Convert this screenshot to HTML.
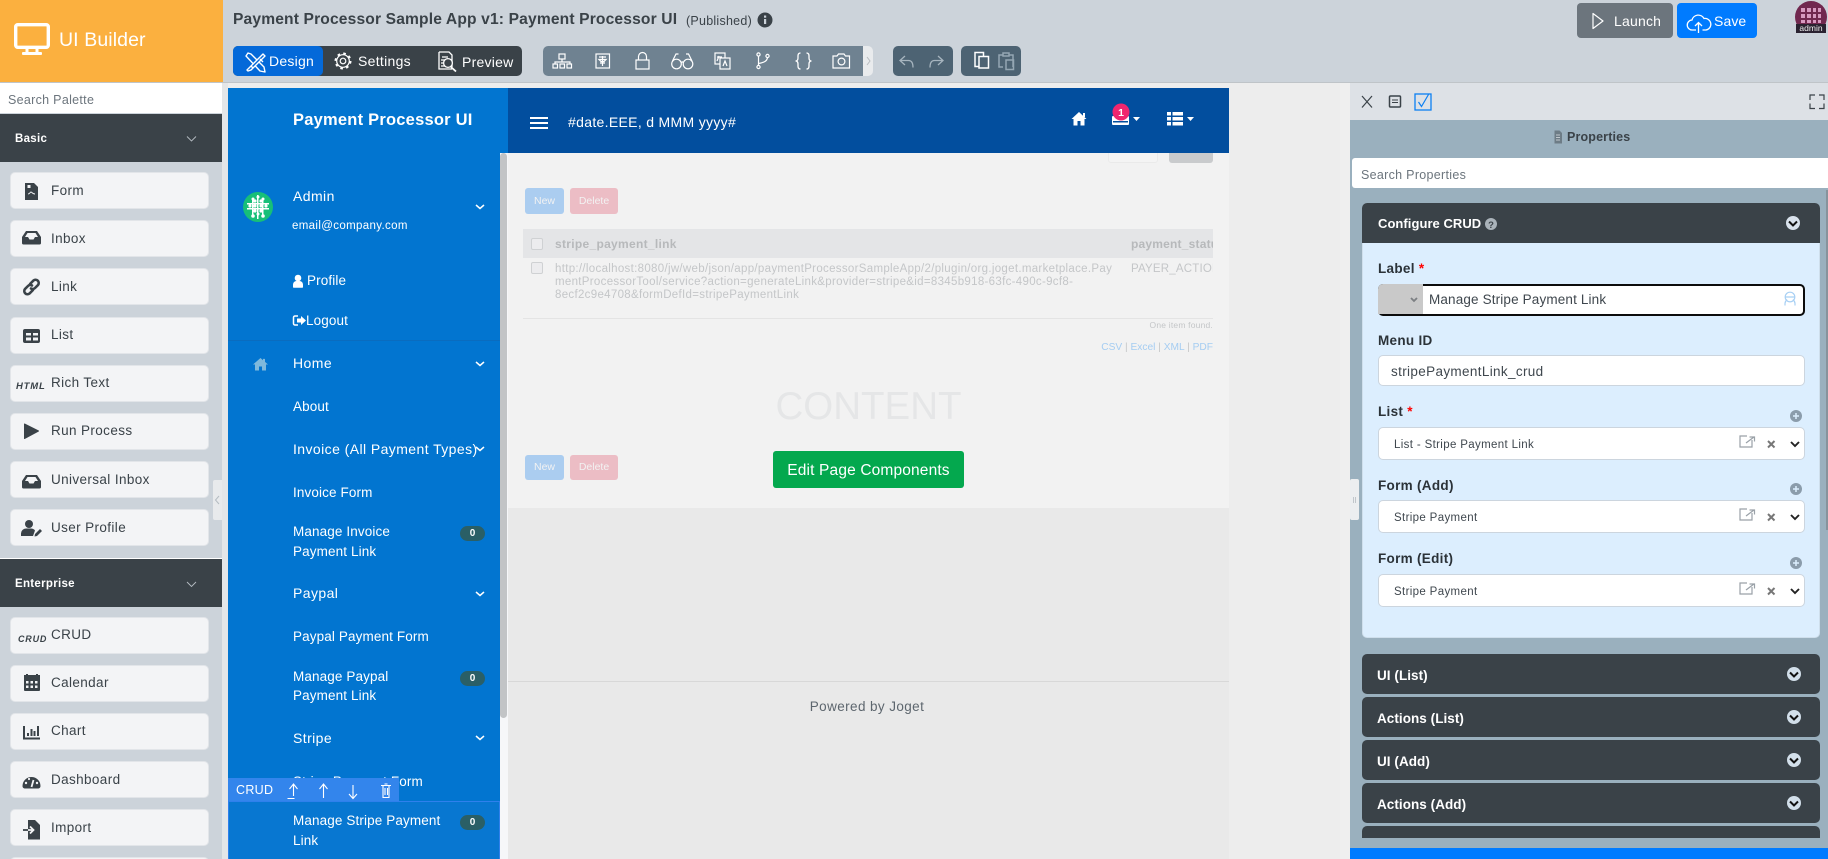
<!DOCTYPE html>
<html><head><meta charset="utf-8"><title>UI Builder</title>
<style>
html,body{margin:0;padding:0;width:1828px;height:859px;overflow:hidden;background:#ccd3da;font-family:"Liberation Sans",sans-serif}
#root{position:relative;width:1828px;height:859px;overflow:hidden}
.b{position:absolute}
.t{position:absolute;white-space:nowrap;line-height:20px;height:20px}
.pi{position:absolute;left:10px;width:199px;height:37px;box-sizing:border-box;background:#f3f4f6;border:1px solid #e2e5e9;border-radius:5px}
.pl{position:absolute;left:51px;white-space:nowrap;line-height:20px;font-size:13.5px;letter-spacing:.38px;color:#3a4248}
.s{position:absolute;left:293px;white-space:nowrap;line-height:20px;font-size:13.5px;letter-spacing:.12px;color:#fff}
.h{font-size:14px;letter-spacing:.42px}
.bd{position:absolute;left:460px;width:25px;height:15px;border-radius:8px;background:#2a5f66;color:#fff;font-size:10px;font-weight:bold;text-align:center;line-height:15px}
.ah{position:absolute;left:1362px;width:458px;height:40px;background:#3a4248;border-radius:5px;color:#fff;font-weight:bold;font-size:13.5px;letter-spacing:.05px;line-height:43px;text-indent:15px}
.lb{position:absolute;left:1378px;color:#2b3238;font-weight:bold;font-size:13.5px;letter-spacing:.3px;line-height:20px;white-space:nowrap}
.in{position:absolute;left:1378px;width:427px;box-sizing:border-box;background:#fff;border:1px solid #ccd5de;border-radius:5px}
.g{color:#c4c6c8;font-size:11.5px}
.btn{position:absolute;border-radius:3px;color:#f2f2f2;font-size:10.5px;text-align:center}
</style></head><body><div id="root">

<!-- top bar -->
<div class="b" style="left:0;top:82px;width:1828px;height:1px;background:#bfc4c8"></div>
<div class="b" style="left:0;top:0;width:223px;height:82px;background:#fbb03f"></div>
<div class="t" style="left:59px;top:29px;height:22px;line-height:22px;color:#fff;font-size:19.5px;letter-spacing:.1px">UI Builder</div>
<div class="t" style="left:233px;top:10px;color:#3a4248;font-size:15.6px;font-weight:bold;letter-spacing:.15px">Payment Processor Sample App v1: Payment Processor UI</div>
<div class="t" style="left:686px;top:11px;color:#3a4248;font-size:12.5px;letter-spacing:.25px">(Published)</div>

<div class="b" style="left:233px;top:46px;width:289px;height:30px;background:#3a4248;border-radius:5px"></div>
<div class="b" style="left:233px;top:46px;width:90px;height:30px;background:#0469d9;border-radius:5px"></div>
<div class="t" style="left:269px;top:51px;color:#fff;font-size:14px;letter-spacing:.25px">Design</div>
<div class="t" style="left:358px;top:51px;color:#fff;font-size:14px;letter-spacing:.3px">Settings</div>
<div class="t" style="left:462px;top:52px;color:#fff;font-size:14px;letter-spacing:.25px">Preview</div>

<div class="b" style="left:543px;top:46px;width:330px;height:30px;background:#e9ebed;border-radius:5px"></div>
<div class="b" style="left:543px;top:46px;width:320px;height:30px;background:#6f8291;border-radius:5px 0 0 5px"></div>
<div class="b" style="left:893px;top:46px;width:60px;height:30px;background:#4d6373;border-radius:5px"></div>
<div class="b" style="left:961px;top:46px;width:60px;height:30px;background:#4d6373;border-radius:5px"></div>

<div class="b" style="left:1577px;top:3px;width:96px;height:35px;background:#6c757d;border-radius:4px"></div>
<div class="t" style="left:1614px;top:11px;color:#fff;font-size:14px;letter-spacing:.2px">Launch</div>
<div class="b" style="left:1677px;top:3px;width:80px;height:35px;background:#007bff;border-radius:4px"></div>
<div class="t" style="left:1714px;top:11px;color:#fff;font-size:14px;letter-spacing:.1px">Save</div>

<!-- palette -->
<div class="b" style="left:0;top:83px;width:222px;height:776px;background:#ccd3da"></div>
<div class="b" style="left:222px;top:83px;width:6px;height:776px;background:#e4e6e8"></div>
<div class="b" style="left:0;top:83px;width:222px;height:30px;background:#fff"></div>
<div class="t" style="left:8px;top:90px;color:#6c757d;font-size:12.5px;letter-spacing:.3px">Search Palette</div>
<div class="b" style="left:0;top:114px;width:222px;height:48px;background:#3a4248"></div>
<div class="t" style="left:15px;top:129px;color:#fff;font-size:11.5px;font-weight:bold;letter-spacing:.3px">Basic</div>

<div class="pi" style="top:172px"></div><div class="pl" style="top:181px">Form</div>
<div class="pi" style="top:220px"></div><div class="pl" style="top:229px">Inbox</div>
<div class="pi" style="top:268px"></div><div class="pl" style="top:277px">Link</div>
<div class="pi" style="top:317px"></div><div class="pl" style="top:325px">List</div>
<div class="pi" style="top:365px"></div><div class="pl" style="top:373px">Rich Text</div>
<div class="pi" style="top:413px"></div><div class="pl" style="top:421px">Run Process</div>
<div class="pi" style="top:461px"></div><div class="pl" style="top:470px">Universal Inbox</div>
<div class="pi" style="top:509px"></div><div class="pl" style="top:518px">User Profile</div>
<div class="t" style="left:16px;top:377px;color:#3a4248;font-size:9.5px;font-weight:bold;font-style:italic;letter-spacing:.8px">HTML</div>

<div class="b" style="left:0;top:558px;width:222px;height:1px;background:#fff"></div>
<div class="b" style="left:0;top:559px;width:222px;height:48px;background:#3a4248"></div>
<div class="t" style="left:15px;top:574px;color:#fff;font-size:11.5px;font-weight:bold;letter-spacing:.3px">Enterprise</div>

<div class="pi" style="top:617px"></div><div class="pl" style="top:625px">CRUD</div>
<div class="pi" style="top:665px"></div><div class="pl" style="top:673px">Calendar</div>
<div class="pi" style="top:713px"></div><div class="pl" style="top:721px">Chart</div>
<div class="pi" style="top:761px"></div><div class="pl" style="top:770px">Dashboard</div>
<div class="pi" style="top:809px"></div><div class="pl" style="top:818px">Import</div>
<div class="pi" style="top:857px"></div>
<div class="t" style="left:18px;top:629px;color:#3a4248;font-size:9px;font-weight:bold;font-style:italic;letter-spacing:.8px">CRUD</div>
<div class="b" style="left:213px;top:480px;width:9px;height:40px;background:#e8eaec;border-radius:2px 0 0 2px"></div>

<!-- canvas -->
<div class="b" style="left:228px;top:83px;width:1122px;height:776px;background:#ededed"></div>
<div class="b" style="left:508px;top:153px;width:721px;height:355px;background:#f2f2f2"></div>
<div class="b" style="left:508px;top:508px;width:721px;height:351px;background:#e9e9e9"></div>
<div class="b" style="left:508px;top:681px;width:721px;height:1px;background:#d8d8d8"></div>
<div class="t" style="left:508px;width:721px;top:697px;text-align:center;color:#5d666e;font-size:13.5px;letter-spacing:.4px;text-indent:-3px">Powered by Joget</div>
<div class="b" style="left:500px;top:153px;width:8px;height:706px;background:#f6f7f9"></div>

<!-- page list -->
<div class="b" style="left:1108px;top:140px;width:50px;height:23px;box-sizing:border-box;border:1px solid #eaeaea;background:#f4f4f4;border-radius:3px"></div>
<div class="b" style="left:1169px;top:140px;width:44px;height:23px;background:#c9cbcd;border-radius:3px"></div>
<div class="btn" style="left:525px;top:188px;width:39px;height:26px;line-height:26px;background:#abcdf0">New</div>
<div class="btn" style="left:570px;top:188px;width:48px;height:26px;line-height:26px;background:#ecbdc5">Delete</div>
<div class="b" style="left:523px;top:229px;width:690px;height:29px;background:#e4e5e7"></div>
<div class="b" style="left:531px;top:238px;width:10px;height:10px;border:1px solid #cfd1d3;border-radius:2px;background:#ececee"></div>
<div class="t g" style="left:555px;top:234px;font-weight:bold;font-size:12px;letter-spacing:.3px;color:#b7b9bb">stripe_payment_link</div>
<div class="t" style="left:1131px;top:234px;width:82px;overflow:hidden;font-weight:bold;font-size:12px;letter-spacing:.2px;color:#b7b9bb">payment_status</div>
<div class="b" style="left:531px;top:262px;width:10px;height:10px;border:1px solid #cfd1d3;border-radius:2px;background:#ececee"></div>
<div class="t g" style="left:555px;top:259px;letter-spacing:.31px">http://localhost:8080/jw/web/json/app/paymentProcessorSampleApp/2/plugin/org.joget.marketplace.Pay</div>
<div class="t g" style="left:555px;top:272px;letter-spacing:.31px">mentProcessorTool/service?action=generateLink&amp;provider=stripe&amp;id=8345b918-63fc-490c-9cf8-</div>
<div class="t g" style="left:555px;top:285px;letter-spacing:.31px">8ecf2c9e4708&amp;formDefId=stripePaymentLink</div>
<div class="t g" style="left:1131px;top:259px;width:82px;overflow:hidden;letter-spacing:.2px">PAYER_ACTION_REQUIRED</div>
<div class="b" style="left:523px;top:318px;width:690px;height:1px;background:#e4e4e4"></div>
<div class="t" style="left:1100px;width:113px;text-align:right;top:315px;font-size:8.5px;color:#c4c6c8;letter-spacing:.2px">One item found.</div>
<div class="t" style="left:1090px;width:123px;text-align:right;top:338px;font-size:10.2px;color:#a5cdf2">CSV <span style="color:#c4c6c8">|</span> Excel <span style="color:#c4c6c8">|</span> XML <span style="color:#c4c6c8">|</span> PDF</div>
<div class="t" style="left:508px;width:721px;top:382px;height:50px;line-height:50px;text-align:center;font-size:38.5px;color:#e5e6e7">CONTENT</div>
<div class="btn" style="left:525px;top:455px;width:39px;height:25px;line-height:25px;background:#abcdf0">New</div>
<div class="btn" style="left:570px;top:455px;width:48px;height:25px;line-height:25px;background:#ecbdc5">Delete</div>
<div class="b" style="left:773px;top:451px;width:191px;height:37px;background:#04a84e;border-radius:3px;color:#fff;font-size:15.5px;text-align:center;line-height:39px;letter-spacing:.15px">Edit Page Components</div>

<!-- nav header -->
<div class="b" style="left:508px;top:88px;width:721px;height:65px;background:#024e9e"></div>
<div class="b" style="left:530px;top:117px;width:18px;height:2px;background:#fff"></div>
<div class="b" style="left:530px;top:122px;width:18px;height:2px;background:#fff"></div>
<div class="b" style="left:530px;top:127px;width:18px;height:2px;background:#fff"></div>
<div class="t" style="left:568px;top:112px;color:#fff;font-size:14px;letter-spacing:.32px">#date.EEE, d MMM yyyy#</div>

<!-- sidebar -->
<div class="b" style="left:228px;top:88px;width:280px;height:65px;background:#0275d0"></div>
<div class="b" style="left:228px;top:153px;width:272px;height:706px;background:#0275d0"></div>
<div class="b" style="left:500px;top:153px;width:7px;height:565px;background:#c2c4c6;border-radius:4px"></div>
<div class="t" style="left:293px;top:110px;color:#fff;font-size:16.5px;font-weight:bold;letter-spacing:.22px">Payment Processor UI</div>
<div class="s h" style="top:186px">Admin</div>
<div class="s" style="left:292px;top:216px;font-size:11.5px;letter-spacing:.35px">email@company.com</div>
<div class="s" style="left:307px;top:271px">Profile</div>
<div class="s" style="left:306px;top:311px">Logout</div>
<div class="b" style="left:228px;top:340px;width:272px;height:1px;background:#0a6cbf"></div>
<div class="s h" style="top:353px">Home</div>
<div class="s" style="top:397px">About</div>
<div class="s h" style="top:439px">Invoice (All Payment Types)</div>
<div class="s" style="top:483px">Invoice Form</div>
<div class="s" style="top:522px">Manage Invoice</div>
<div class="s" style="top:542px">Payment Link</div>
<div class="bd" style="top:526px">0</div>
<div class="s h" style="top:583px">Paypal</div>
<div class="s" style="top:627px">Paypal Payment Form</div>
<div class="s" style="top:667px">Manage Paypal</div>
<div class="s" style="top:686px">Payment Link</div>
<div class="bd" style="top:671px">0</div>
<div class="s h" style="top:728px">Stripe</div>
<div class="s" style="top:772px">Stripe Payment Form</div>
<div class="b" style="left:228px;top:801px;width:272px;height:58px;box-sizing:border-box;border:1px solid #2f80ec;border-bottom:0;background:#0877d1"></div>
<div class="s" style="top:811px">Manage Stripe Payment</div>
<div class="s" style="top:831px">Link</div>
<div class="bd" style="top:815px">0</div>
<div class="b" style="left:228px;top:778px;width:171px;height:23px;background:#3385ec"></div>
<div class="t" style="left:236px;top:780px;color:#fff;font-size:12.5px;letter-spacing:.3px">CRUD</div>

<!-- right panel -->
<div class="b" style="left:1340px;top:83px;width:10px;height:776px;background:#efefef"></div>
<div class="b" style="left:1350px;top:83px;width:478px;height:37px;background:#dde1e6"></div>
<div class="b" style="left:1350px;top:120px;width:478px;height:739px;background:#9ab0be"></div>
<div class="t" style="left:1567px;top:127px;color:#3a4248;font-size:12.5px;font-weight:bold;letter-spacing:.15px">Properties</div>
<div class="b" style="left:1352px;top:158px;width:476px;height:30px;background:#fff;border-radius:3px 0 0 3px"></div>
<div class="t" style="left:1361px;top:165px;color:#6c757d;font-size:12.5px;letter-spacing:.3px">Search Properties</div>
<div class="b" style="left:1350px;top:479px;width:9px;height:41px;background:#eceef0;border-radius:2px"></div>
<div class="b" style="left:1826px;top:190px;width:2px;height:340px;background:#87939c"></div>

<div class="b" style="left:1362px;top:203px;width:458px;height:435px;box-sizing:border-box;background:#dceefe;border:1px solid #cfdfec;border-radius:5px"></div>
<div class="ah" style="top:203px;border-radius:5px 5px 0 0;line-height:41px;text-indent:16px;font-size:13px">Configure CRUD</div>

<div class="lb" style="top:259px">Label <span style="color:#f00">*</span></div>
<div class="b" style="left:1378px;top:284px;width:427px;height:32px;box-sizing:border-box;background:#fff;border:2px solid #0c0c0c;border-radius:5px"></div>
<div class="b" style="left:1378px;top:284px;width:45px;height:30px;background:#c9c9c9;border-radius:5px 0 0 0"></div>
<div class="t" style="left:1429px;top:290px;color:#3f474e;font-size:13.5px;letter-spacing:.15px">Manage Stripe Payment Link</div>

<div class="lb" style="top:331px">Menu ID</div>
<div class="in" style="top:355px;height:31px"></div>
<div class="t" style="left:1391px;top:362px;color:#3f474e;font-size:13.5px;letter-spacing:.35px">stripePaymentLink_crud</div>

<div class="lb" style="top:402px">List <span style="color:#f00">*</span></div>
<div class="in" style="top:427px;height:33px"></div>
<div class="t" style="left:1394px;top:435px;color:#3f474e;font-size:11.5px;letter-spacing:.35px">List - Stripe Payment Link</div>

<div class="lb" style="top:476px">Form (Add)</div>
<div class="in" style="top:500px;height:33px"></div>
<div class="t" style="left:1394px;top:508px;color:#3f474e;font-size:11.5px;letter-spacing:.35px">Stripe Payment</div>

<div class="lb" style="top:549px">Form (Edit)</div>
<div class="in" style="top:574px;height:33px"></div>
<div class="t" style="left:1394px;top:582px;color:#3f474e;font-size:11.5px;letter-spacing:.35px">Stripe Payment</div>

<div class="ah" style="top:654px">UI (List)</div>
<div class="ah" style="top:697px">Actions (List)</div>
<div class="ah" style="top:740px">UI (Add)</div>
<div class="ah" style="top:783px">Actions (Add)</div>
<div class="b" style="left:1362px;top:826px;width:458px;height:12px;background:#3a4248;border-radius:5px 5px 0 0"></div>
<div class="b" style="left:1350px;top:848px;width:478px;height:11px;background:#007bff"></div>

<!-- icons -->
<svg class="b" style="left:0;top:0" width="1828" height="859" viewBox="0 0 1828 859" fill="none">
<!-- logo -->
<rect x="15.7" y="24.7" width="32.6" height="22.6" rx="2" stroke="#fff" stroke-width="3.4"/>
<path d="M27 49v4M37 49v4" stroke="#fff" stroke-width="3"/><rect x="22" y="52" width="20" height="3" rx="1" fill="#fff"/>
<!-- info -->
<circle cx="765" cy="20" r="7.5" fill="#3a4248"/><rect x="764" y="19" width="2.2" height="5" fill="#ccd3da"/><rect x="764" y="15.5" width="2.2" height="2.2" fill="#ccd3da"/>
<!-- design -->
<g stroke="#fff" stroke-width="1.4" stroke-linejoin="round">
<path d="M246 56l2-3 3 1 13 13 1 5-5-1z"/><path d="M249 68l14-14 2 2-14 14-3 1-1-1z" fill="#0469d9"/><path d="M260 59l3 3M251 66l2 2"/>
</g>
<!-- settings -->
<g stroke="#fff"><circle cx="343" cy="61" r="2.8" stroke-width="1.2"/><circle cx="343" cy="61" r="6.3" stroke-width="1.2"/><circle cx="343" cy="61" r="7.5" stroke-width="2" stroke-dasharray="2.6 3.29"/></g>
<!-- preview -->
<g stroke="#fff" stroke-width="1.3"><path d="M439 52h10l3 3v12M452 69h-13V52"/><path d="M442 57h6M441 60h8M441 63h6M441 66h4"/><circle cx="448" cy="63" r="4.4" fill="#3a4248"/><path d="M451 67l5 4.5" stroke-width="1.8"/></g>
<!-- tools -->
<g stroke="#fff" stroke-width="1.2">
<rect x="559" y="54" width="6" height="5"/><rect x="553" y="64" width="4.5" height="4"/><rect x="560" y="64" width="4.5" height="4"/><rect x="567" y="64" width="4.5" height="4"/><path d="M562 59v3M555 64v-2h15v2"/>
<rect x="596" y="54" width="13.5" height="14"/><path d="M602.5 56v10M599 57h7M599 59.5h7l-2 2h-3zM600 63h5"/>
<rect x="636" y="60" width="13" height="9"/><path d="M638.5 60v-3.5a4 4 0 0 1 8 0v3.5"/>
<circle cx="676.5" cy="64" r="4.8"/><circle cx="688" cy="64" r="4.8"/><path d="M681.3 62.5c1-.8 1.500-.8 2 0M672.5 61l3.500-7h2.500M692 61l-3.500-7H686"/>
<rect x="715" y="53" width="10" height="11"/><rect x="720" y="58" width="10" height="11" fill="#6f8291"/><path d="M717 57h5M719 56l-2 5M723 66l2-5 2 5"/>
<circle cx="758.5" cy="54.5" r="1.6"/><circle cx="758.5" cy="67" r="1.6"/><circle cx="767.5" cy="56" r="1.6"/><path d="M758.5 56v9.5M758.5 63.5c5-1 8.5-2 9-6"/>
<path d="M800.5 53c-3 0-2.5 3-2.5 5s-1 3-2.5 3c1.5 0 2.500 1 2.500 3s-.5 5 2.500 5M806.500 53c3 0 2.500 3 2.500 5s1 3 2.500 3c-1.500 0-2.500 1-2.500 3s.5 5-2.500 5" stroke-width="1.3"/>
<path d="M833 56h4l1.500-2h5.500l1.500 2h4v12h-16.500z"/><circle cx="841.5" cy="61.5" r="3.4"/>
</g>
<path d="M867 57l3 4-3 4" stroke="#b8bcc0" stroke-width="1"/>
<g stroke="#a7b5bf" stroke-width="1.3"><path d="M905 56l-5 4.5 5 4.5M900.500 60.5h8c3 0 4.500 2 4.500 7"/><path d="M938 56l5 4.5-5 4.5M942.500 60.5h-8c-3 0-4.500 2-4.500 7"/></g>
<g stroke="#fff" stroke-width="1.5"><path d="M983.500 56v-3.500H975v14h4"/><rect x="979" y="56.5" width="9.5" height="11.5"/></g>
<g stroke="#94a6b3" stroke-width="1.5"><path d="M1009 55h4v12M1003 67h-4V55h4"/><rect x="1003" y="53" width="6" height="3"/><rect x="1006" y="60" width="7.5" height="9.5"/></g>
<!-- launch / save -->
<path d="M1593 13.500l10 7.500-10 7.500z" stroke="#fff" stroke-width="1.2" stroke-linejoin="round"/>
<path d="M1696 30h-3.500a5 5 0 0 1-.5-10 6.500 6.500 0 0 1 12-1.500 5.500 5.500 0 0 1 2 11.500h-3.500M1698.500 33V23M1695 26l3.500-3.500 3.500 3.500" stroke="#fff" stroke-width="1.3"/>
<!-- avatar -->
<ellipse cx="1811" cy="17" rx="16" ry="16" fill="#71284f"/><path d="M1801 8h20v15h-20z" fill="#d79ac0"/><g fill="#71284f"><rect x="1805" y="8" width="2" height="15"/><rect x="1811" y="8" width="2" height="15"/><rect x="1816" y="8" width="2" height="15"/><rect x="1801" y="12" width="20" height="2"/><rect x="1801" y="18" width="20" height="2"/></g>
<rect x="1796" y="24" width="30" height="9" fill="#2a2230"/><text x="1811" y="31" font-size="8.5" fill="#eee" text-anchor="middle" font-family="Liberation Sans">admin</text>
<!-- palette chevrons -->
<path d="M187 136.500l4.500 4.500 4.500-4.500M187 582l4.500 4.500 4.500-4.500" stroke="#b5bcc2" stroke-width=".9"/>
<!-- palette icons -->
<path d="M25 183h9l4 4v13H25z" fill="#3a4248"/><path d="M28 194c2 0 2-2 3-2s1 2 4 2" stroke="#f3f4f6"/><rect x="27.5" y="185" width="3" height="3" fill="#f3f4f6"/>
<path d="M22 237l4-6h11l4 6v6a1.500 1.500 0 0 1-1.500 1.500h-16A1.500 1.500 0 0 1 22 243z" fill="#3a4248"/><path d="M25 237h3l1.500 2.500h4l1.500-2.500h3l-2.500-4h-8z" fill="#f3f4f6"/>
<path d="M22 481l4-6h11l4 6v6a1.500 1.500 0 0 1-1.500 1.500h-16A1.500 1.500 0 0 1 22 487z" fill="#3a4248"/><path d="M25 481h3l1.500 2.500h4l1.500-2.500h3l-2.500-4h-8z" fill="#f3f4f6"/>
<g stroke="#3a4248" stroke-width="2.6" stroke-linecap="round"><path d="M30 284l3.500-3.500a3.200 3.200 0 0 1 4.500 4.500l-3 3a3.200 3.200 0 0 1-4 .5"/><path d="M33 290l-3.500 3.500a3.200 3.200 0 0 1-4.500-4.500l3-3a3.200 3.200 0 0 1 4-.5"/></g>
<rect x="23" y="329" width="17" height="14" rx="2" fill="#3a4248"/><path d="M26 333h5v2.500h-5zM33 333h5v2.500h-5zM26 337.500h5v3h-5zM33 337.500h5v3h-5z" fill="#f3f4f6"/>
<path d="M24.500 424l14 7-14 7.500z" fill="#3a4248" stroke="#3a4248" stroke-linejoin="round"/>
<circle cx="29" cy="524" r="4" fill="#3a4248"/><path d="M21 536v-2.500a5 5 0 0 1 5-5h5a5 5 0 0 1 4 2l-2 5.500z" fill="#3a4248"/><path d="M35 534l5-5 2 2-5 5-2.500.5z" fill="#3a4248"/>
<path d="M24 675h16v15a1 1 0 0 1-1 1H25a1 1 0 0 1-1-1z" fill="#3a4248"/><path d="M27 677v-3M37 677v-3" stroke="#3a4248" stroke-width="2"/><g fill="#f3f4f6"><rect x="26" y="681" width="2.5" height="2.5"/><rect x="30.5" y="681" width="2.5" height="2.5"/><rect x="35" y="681" width="2.5" height="2.5"/><rect x="26" y="685.5" width="2.5" height="2.5"/><rect x="30.5" y="685.5" width="2.5" height="2.5"/><rect x="35" y="685.5" width="2.5" height="2.5"/></g>
<path d="M24 726v12.500h16" stroke="#3a4248" stroke-width="2"/><path d="M28 733v3M31.500 729v7M34.500 731v5M38 726v10" stroke="#3a4248" stroke-width="2"/>
<path d="M22.500 786a9 9 0 1 1 18 0 2.500 2.500 0 0 1-2 2.500h-14a2.500 2.500 0 0 1-2-2.500z" fill="#3a4248"/><path d="M31.500 787l2-7" stroke="#f3f4f6" stroke-width="1.8"/><circle cx="26" cy="783" r="1.2" fill="#f3f4f6"/><circle cx="37" cy="783" r="1.2" fill="#f3f4f6"/><circle cx="29" cy="779" r="1.1" fill="#f3f4f6"/>
<path d="M28 820h7l5 5v14.500H28z" fill="#3a4248"/><path d="M23 830h10M30 826.500l3.500 3.500-3.500 3.500" stroke="#f3f4f6" stroke-width="1.8"/><path d="M23 830h5" stroke="#3a4248" stroke-width="1.8"/>
<path d="M219 496l-3.500 4 3.500 4" stroke="#b5bcc2"/>
<!-- nav icons -->
<path d="M1079 112l-7.500 7h2v6.500h4v-4.500h3v4.500h4V119h2z" fill="#fff"/><rect x="1083" y="113" width="2" height="4" fill="#fff"/>
<rect x="1112" y="116" width="17" height="9" rx="1" fill="#fff"/><rect x="1113" y="121" width="15" height="1.5" fill="#024e9e"/>
<circle cx="1121" cy="112" r="8.5" fill="#f0266f"/><text x="1121" y="116" font-size="10.5" font-weight="bold" fill="#fff" text-anchor="middle" font-family="Liberation Sans">1</text>
<path d="M1133 117h7l-3.500 4z" fill="#fff"/>
<g fill="#fff"><rect x="1167" y="112" width="4" height="3.5"/><rect x="1172.5" y="112" width="10.5" height="3.5"/><rect x="1167" y="117" width="4" height="3.5"/><rect x="1172.5" y="117" width="10.5" height="3.5"/><rect x="1167" y="122" width="4" height="3.5"/><rect x="1172.5" y="122" width="10.5" height="3.5"/></g>
<path d="M1187 117h7l-3.500 4z" fill="#fff"/>
<!-- sidebar avatar -->
<circle cx="258" cy="207" r="15" fill="#17bf78"/>
<g fill="#fff"><rect x="247" y="203" width="22" height="1.5"/><rect x="247" y="208" width="22" height="1.5"/><rect x="252" y="198" width="1.5" height="18"/><rect x="257" y="195" width="1.5" height="24"/><rect x="262" y="198" width="1.5" height="18"/><circle cx="258" cy="197" r="1.5"/><circle cx="253" cy="199" r="1.5"/><circle cx="263" cy="199" r="1.5"/><circle cx="253" cy="216" r="1.8"/><circle cx="263" cy="216" r="1.8"/><circle cx="258" cy="214" r="1.5"/><circle cx="250" cy="206" r="1.6"/><circle cx="266" cy="206" r="1.6"/><circle cx="255" cy="206" r="1.6"/><circle cx="261" cy="206" r="1.6"/><circle cx="255" cy="211" r="1.6"/><circle cx="261" cy="211" r="1.6"/><circle cx="255" cy="201" r="1.6"/><circle cx="261" cy="201" r="1.6"/></g>
<!-- sidebar icons -->
<circle cx="298" cy="278" r="3.3" fill="#fff"/><path d="M293 287v-2.500a3.500 3.500 0 0 1 3.500-3.500h3a3.500 3.500 0 0 1 3.500 3.500v2.500a.8.8 0 0 1-.8.8h-8.400a.8.8 0 0 1-.8-.8z" fill="#fff"/>
<path d="M298 316h-3a1.500 1.500 0 0 0-1.500 1.500v6a1.500 1.500 0 0 0 1.500 1.500h3" stroke="#fff" stroke-width="1.5"/><path d="M297 318.500h4V316l5 4.500-5 4.500v-2.500h-4z" fill="#fff"/>
<path d="M260.500 358l-7.500 6.500h2v6h4v-4h3v4h4v-6h2l-3-2.600v-3h-2v1.300z" fill="#7fb9dc"/>
<g stroke="#fff" stroke-width="1.5"><path d="M476 205l4 3.500 4-3.500M476 362l4 3.500 4-3.500M476 447l4 3.500 4-3.500M476 592l4 3.500 4-3.500M476 736l4 3.500 4-3.500"/></g>
<!-- crud bar icons -->
<g stroke="#fff" stroke-width="1.1"><path d="M293.500 796v-11M289.500 789l4-5 4 5M287.500 798.500h7"/><path d="M323.500 798v-13M319.500 789l4-5 4 5"/><path d="M353 785v13M349 794l4 4.500 4-4.500"/><path d="M381 785.500h10M383 785.500v12h6v-12M384.500 784h3M385 788v7M387.500 788v7"/></g>
<!-- panel toolbar -->
<path d="M1362 96l10 11.500M1372 96l-10 11.500" stroke="#3a4248" stroke-width="1.2"/>
<rect x="1389.5" y="96" width="11" height="11" rx="1" stroke="#3a4248" stroke-width="1.5"/><path d="M1392 100h6M1392 102.500h6" stroke="#3a4248"/>
<rect x="1415" y="94" width="16" height="16" stroke="#0c7ff2" stroke-width="1.3"/><path d="M1418.500 102l3 4.500 7-12" stroke="#0c7ff2" stroke-width="1.2"/>
<path d="M1810 100v-5h5M1824 100v-5h-5M1810 103.500v5h5M1824 103.500v5h-5" stroke="#3a4248" stroke-width="1.2"/>
<!-- panel header -->
<path d="M1554.500 130.500h5l2.500 2.500v10.500h-7.500z" fill="#6d7c86"/><path d="M1556 135h4M1556 137.500h4M1556 140h4" stroke="#dde1e6" stroke-width=".7"/>
<!-- config -->
<circle cx="1491" cy="224" r="6" fill="#aab3ba"/><text x="1491" y="228" font-size="9.5" font-weight="bold" fill="#3a4248" text-anchor="middle" font-family="Liberation Sans">?</text>
<circle cx="1793" cy="223" r="7" fill="#d9e2ec"/><path d="M1789 221.500l4 4 4-4" stroke="#111" stroke-width="2"/>
<circle cx="1794" cy="674" r="7" fill="#d2dfea"/><path d="M1790 672.500l4 4 4-4" stroke="#111" stroke-width="2"/>
<circle cx="1794" cy="717" r="7" fill="#d2dfea"/><path d="M1790 715.500l4 4 4-4" stroke="#111" stroke-width="2"/>
<circle cx="1794" cy="760" r="7" fill="#d2dfea"/><path d="M1790 758.500l4 4 4-4" stroke="#111" stroke-width="2"/>
<circle cx="1794" cy="803" r="7" fill="#d2dfea"/><path d="M1790 801.500l4 4 4-4" stroke="#111" stroke-width="2"/>
<path d="M1411 298l3 3 3-3" stroke="#7c7f82" stroke-width="1.8"/>
<g stroke="#a8d0f4" stroke-width="1.2"><circle cx="1790" cy="297" r="4.8"/><path d="M1785 297h10M1785 305.500v-2c0-2 1-3 2-4M1795 305.500v-2c0-2-1-3-2-4"/></g>
<!-- plus -->
<circle cx="1796" cy="416" r="6" fill="#8b9cab"/><path d="M1793 416h6M1796 413v6" stroke="#dceefe" stroke-width="1.5"/>
<circle cx="1796" cy="489" r="6" fill="#8b9cab"/><path d="M1793 489h6M1796 486v6" stroke="#dceefe" stroke-width="1.5"/>
<circle cx="1796" cy="563" r="6" fill="#8b9cab"/><path d="M1793 563h6M1796 560v6" stroke="#dceefe" stroke-width="1.5"/>
<!-- select icons -->
<g stroke="#9aa1a8" stroke-width="1.2"><path d="M1752 440v7h-12v-11h7M1746 443l8-6M1749.500 437h5v4.500"/></g><path d="M1768 441l6.500 6.500M1774.500 441l-6.500 6.500" stroke="#777" stroke-width="2"/><path d="M1791 442l4 4 4-4" stroke="#222" stroke-width="1.9"/>
<g transform="translate(0 73)"><g stroke="#9aa1a8" stroke-width="1.2"><path d="M1752 440v7h-12v-11h7M1746 443l8-6M1749.500 437h5v4.500"/></g><path d="M1768 441l6.500 6.500M1774.500 441l-6.500 6.500" stroke="#777" stroke-width="2"/><path d="M1791 442l4 4 4-4" stroke="#222" stroke-width="1.9"/></g>
<g transform="translate(0 147)"><g stroke="#9aa1a8" stroke-width="1.2"><path d="M1752 440v7h-12v-11h7M1746 443l8-6M1749.500 437h5v4.500"/></g><path d="M1768 441l6.500 6.500M1774.500 441l-6.500 6.500" stroke="#777" stroke-width="2"/><path d="M1791 442l4 4 4-4" stroke="#222" stroke-width="1.9"/></g>
<path d="M1353.500 497v6M1355.500 497v6" stroke="#b5bcc2" stroke-width=".8"/>
</svg>
</div></body></html>
